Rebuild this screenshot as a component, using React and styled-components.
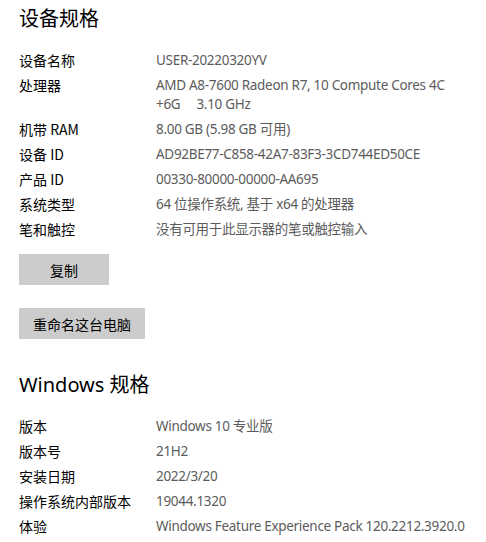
import React from "react";
import styled, { createGlobalStyle } from "styled-components";

const GlobalStyle = createGlobalStyle`
  html, body {
    margin: 0;
    padding: 0;
    background: #ffffff;
  }
  body {
    font-family: "Noto Sans", "Noto Sans CJK SC", sans-serif;
    -webkit-font-smoothing: antialiased;
  }
`;

const Page = styled.div`
  display: flex;
  flex-direction: column;
  padding: 4px 19px 0;
  width: 486px;
  box-sizing: border-box;
`;

const Title = styled.h2`
  margin: 0;
  font-family: "Noto Sans", "Noto Sans CJK SC", sans-serif;
  font-weight: 400;
  font-size: 20px;
  line-height: 30px;
  color: #000;
  margin-top: ${(p) => p.$top || 0}px;
  margin-bottom: 17px;
`;

const SpecList = styled.dl`
  display: grid;
  grid-template-columns: 137px 1fr;
  row-gap: 6px;
  margin: 0;
`;

const Label = styled.dt`
  font-family: "Noto Sans CJK SC", sans-serif;
  font-size: 14px;
  line-height: 19px;
  color: #000;
`;

const Value = styled.dd`
  margin: 0;
  font-size: 13.5px;
  letter-spacing: -0.3px;
  line-height: 19px;
  color: #5c5c5c;
  white-space: ${(p) => (p.$nowrap ? "nowrap" : "normal")};
`;

const Button = styled.button`
  align-self: flex-start;
  height: 31px;
  min-width: 90px;
  padding: 0 14px;
  border: none;
  background: #cccccc;
  font-family: "Noto Sans CJK SC", sans-serif;
  font-size: 14px;
  color: #000;
  margin-top: ${(p) => p.$top}px;
`;

const device = [
  ["设备名称", "USER-20220320YV"],
  ["处理器", "AMD A8-7600 Radeon R7, 10 Compute Cores 4C +6G\u00a0\u00a0\u00a0\u00a0 3.10 GHz"],
  ["机带 RAM", "8.00 GB (5.98 GB 可用)"],
  ["设备 ID", "AD92BE77-C858-42A7-83F3-3CD744ED50CE"],
  ["产品 ID", "00330-80000-00000-AA695"],
  ["系统类型", "64 位操作系统, 基于 x64 的处理器"],
  ["笔和触控", "没有可用于此显示器的笔或触控输入"],
];

const windows = [
  ["版本", "Windows 10 专业版"],
  ["版本号", "21H2"],
  ["安装日期", "2022/3/20"],
  ["操作系统内部版本", "19044.1320"],
  ["体验", "Windows Feature Experience Pack 120.2212.3920.0", true],
];

const Specs = ({ rows }) => (
  <SpecList>
    {rows.map(([k, v, nowrap]) => (
      <React.Fragment key={k}>
        <Label>{k}</Label>
        <Value $nowrap={nowrap}>{v}</Value>
      </React.Fragment>
    ))}
  </SpecList>
);

export default function App() {
  return (
    <>
      <GlobalStyle />
      <Page>
        <Title>设备规格</Title>
        <Specs rows={device} />
        <Button $top={15}>复制</Button>
        <Button $top={23}>重命名这台电脑</Button>
        <Title $top={31}>Windows 规格</Title>
        <Specs rows={windows} />
      </Page>
    </>
  );
}
